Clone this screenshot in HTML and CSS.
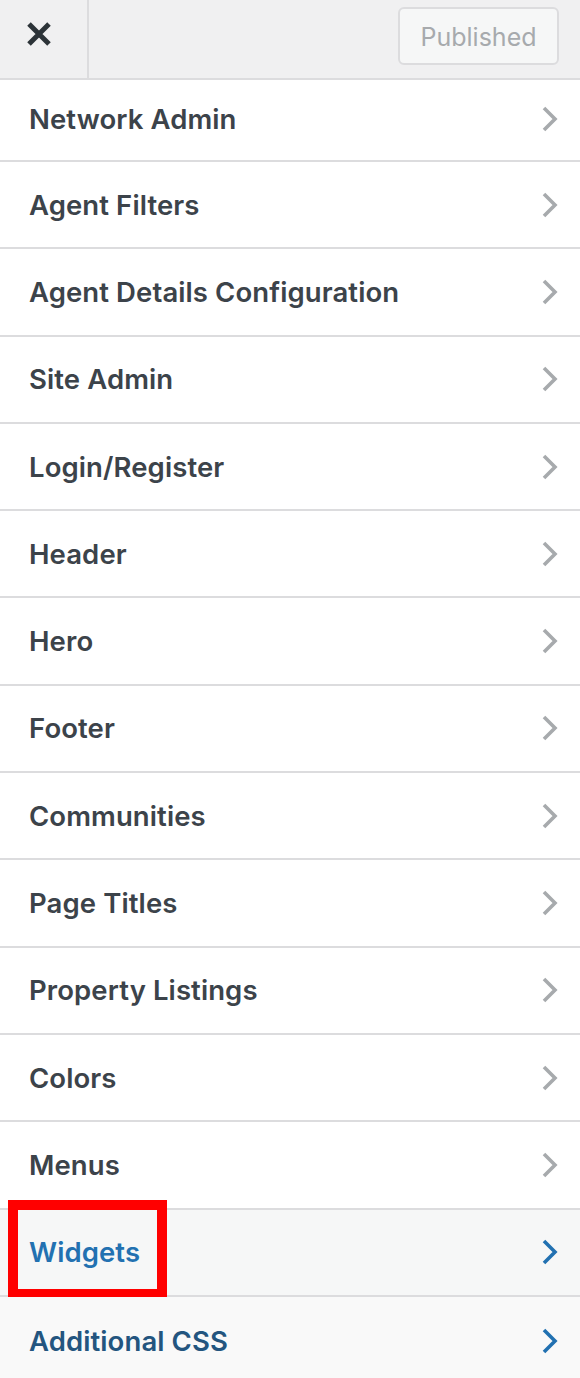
FILE: index.html
```html
<!DOCTYPE html>
<html lang="en">
<head>
<meta charset="utf-8">
<title>Customizer</title>
<link rel="stylesheet" href="styles.css">
</head>
<body>
<div class="panel">
  <header class="topbar">
    <button class="close" aria-label="Close">
      <svg width="26" height="26" viewBox="0 0 26 26"><path d="M3 3 L23 23 M23 3 L3 23" stroke="#2c3338" stroke-width="5" stroke-linecap="butt"/></svg>
    </button>
    <div class="actions">
      <span class="published">Published</span>
    </div>
  </header>
  <ul class="menu">
    <li class="row first"><span class="label">Network Admin</span><svg class="chev" viewBox="0 0 16 26"><path d="M2 2 L13 13 L2 24" fill="none" stroke="currentColor" stroke-width="3.6"/></svg></li>
    <li class="row"><span class="label">Agent Filters</span><svg class="chev" viewBox="0 0 16 26"><path d="M2 2 L13 13 L2 24" fill="none" stroke="currentColor" stroke-width="3.6"/></svg></li>
    <li class="row"><span class="label">Agent Details Configuration</span><svg class="chev" viewBox="0 0 16 26"><path d="M2 2 L13 13 L2 24" fill="none" stroke="currentColor" stroke-width="3.6"/></svg></li>
    <li class="row"><span class="label">Site Admin</span><svg class="chev" viewBox="0 0 16 26"><path d="M2 2 L13 13 L2 24" fill="none" stroke="currentColor" stroke-width="3.6"/></svg></li>
    <li class="row"><span class="label">Login/Register</span><svg class="chev" viewBox="0 0 16 26"><path d="M2 2 L13 13 L2 24" fill="none" stroke="currentColor" stroke-width="3.6"/></svg></li>
    <li class="row"><span class="label">Header</span><svg class="chev" viewBox="0 0 16 26"><path d="M2 2 L13 13 L2 24" fill="none" stroke="currentColor" stroke-width="3.6"/></svg></li>
    <li class="row"><span class="label">Hero</span><svg class="chev" viewBox="0 0 16 26"><path d="M2 2 L13 13 L2 24" fill="none" stroke="currentColor" stroke-width="3.6"/></svg></li>
    <li class="row"><span class="label">Footer</span><svg class="chev" viewBox="0 0 16 26"><path d="M2 2 L13 13 L2 24" fill="none" stroke="currentColor" stroke-width="3.6"/></svg></li>
    <li class="row"><span class="label">Communities</span><svg class="chev" viewBox="0 0 16 26"><path d="M2 2 L13 13 L2 24" fill="none" stroke="currentColor" stroke-width="3.6"/></svg></li>
    <li class="row"><span class="label">Page Titles</span><svg class="chev" viewBox="0 0 16 26"><path d="M2 2 L13 13 L2 24" fill="none" stroke="currentColor" stroke-width="3.6"/></svg></li>
    <li class="row"><span class="label">Property Listings</span><svg class="chev" viewBox="0 0 16 26"><path d="M2 2 L13 13 L2 24" fill="none" stroke="currentColor" stroke-width="3.6"/></svg></li>
    <li class="row"><span class="label">Colors</span><svg class="chev" viewBox="0 0 16 26"><path d="M2 2 L13 13 L2 24" fill="none" stroke="currentColor" stroke-width="3.6"/></svg></li>
    <li class="row"><span class="label">Menus</span><svg class="chev" viewBox="0 0 16 26"><path d="M2 2 L13 13 L2 24" fill="none" stroke="currentColor" stroke-width="3.6"/></svg></li>
    <li class="row widgets"><span class="label">Widgets</span><svg class="chev" viewBox="0 0 16 26"><path d="M2 2 L13 13 L2 24" fill="none" stroke="currentColor" stroke-width="3.6"/></svg><span class="highlight"></span></li>
    <li class="row css"><span class="label">Additional CSS</span><svg class="chev" viewBox="0 0 16 26"><path d="M2 2 L13 13 L2 24" fill="none" stroke="currentColor" stroke-width="3.6"/></svg></li>
  </ul>
</div>
</body>
</html>
```
FILE: styles.css
```css
html, body {
  margin: 0;
  padding: 0;
  background: #ffffff;
}
body {
  font-family: Inter, "Noto Sans", "Liberation Sans", sans-serif;
  width: 580px;
  height: 1378px;
  overflow: hidden;
}
.panel {
  display: flex;
  flex-direction: column;
}
.topbar {
  display: flex;
  height: 78px;
  background: #f0f0f1;
  border-bottom: 2px solid #dcdcde;
}
.close {
  width: 89px;
  height: 78px;
  box-sizing: border-box;
  border: 0;
  border-right: 2px solid #dcdcde;
  background: transparent;
  margin: 0;
  padding: 0 9px 10px 0;
  display: flex;
  align-items: center;
  justify-content: center;
}
.actions {
  flex: 1;
  display: flex;
  justify-content: flex-end;
  align-items: flex-start;
  padding: 7px 21px 0 0;
}
.published {
  box-sizing: border-box;
  width: 161px;
  height: 58px;
  border: 2px solid #dcdcde;
  border-radius: 6px;
  background: #f6f7f7;
  color: #a7aaad;
  font-size: 25px;
  font-weight: 400;
  display: flex;
  align-items: center;
  justify-content: center;
  padding-top: 2px;
}
.menu {
  list-style: none;
  margin: 0;
  padding: 0;
}
.row {
  position: relative;
  box-sizing: border-box;
  height: 87.3px;
  border-bottom: 2px solid #dcdcde;
  display: flex;
  align-items: center;
  justify-content: space-between;
  padding: 0 22px 0 29px;
  color: #3c434a;
  background: #ffffff;
}
.row.first {
  height: 82px;
  padding-bottom: 3px;
}
.label {
  font-size: 27.5px;
  font-weight: 600;
  letter-spacing: 0.1px;
}
.chev {
  width: 16px;
  height: 26px;
  color: #a7aaad;
}
.row.widgets {
  background: #f6f7f7;
  color: #2271b1;
}
.row.widgets .chev,
.row.css .chev {
  color: #2271b1;
}
.row.css {
  background: #f9f9f9;
  color: #23557f;
  border-bottom: 0;
}
.highlight {
  position: absolute;
  left: 8px;
  top: -10px;
  width: 159px;
  height: 99px;
  box-sizing: border-box;
  border: 10px solid #ff0000;
}
```
